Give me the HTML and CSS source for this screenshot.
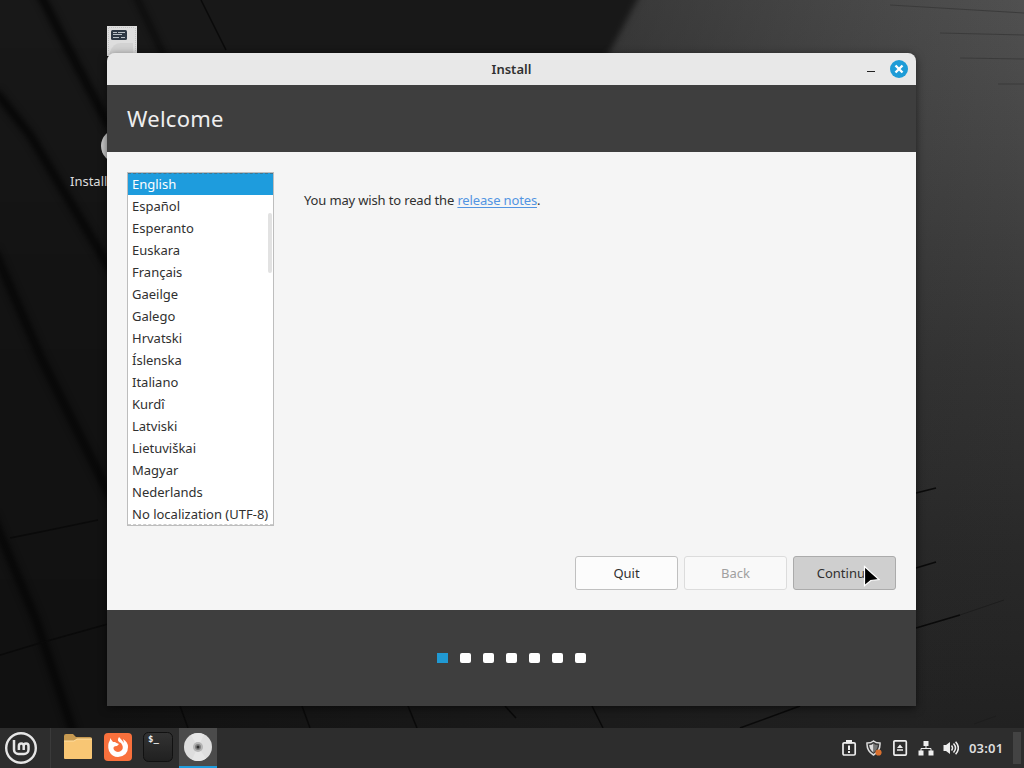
FILE: index.html
```html
<!DOCTYPE HTML>
<html lang="en">
<head>
  <title>Install</title>
  <meta charset="utf-8">
  <meta name="viewport" content="width=device-width" />
  <link rel="stylesheet" href="styles.css">
</head>
<body>
  <div class="desktop">
    <svg class="wallpaper" viewBox="0 0 1024 728" preserveAspectRatio="none">
      <defs>
        <linearGradient id="light" x1="0" y1="0" x2="0" y2="1">
          <stop offset="0" stop-color="#505050" />
          <stop offset=".2" stop-color="#464646" />
          <stop offset=".5" stop-color="#343434" />
          <stop offset=".75" stop-color="#292929" />
          <stop offset="1" stop-color="#212121" />
        </linearGradient>
        <linearGradient id="shade" x1="0" y1="0" x2="1" y2="0">
          <stop offset="0" stop-color="#181818" stop-opacity="0" />
          <stop offset=".6" stop-color="#1b1b1b" stop-opacity=".45" />
          <stop offset="1" stop-color="#222" stop-opacity="0" />
        </linearGradient>
        <linearGradient id="wall" x1="0" y1="0" x2="0" y2="1">
          <stop offset="0" stop-color="#191919" />
          <stop offset=".4" stop-color="#131313" />
          <stop offset="1" stop-color="#111" />
        </linearGradient>
        <linearGradient id="floor" x1="0" y1="0" x2="1" y2="0">
          <stop offset="0" stop-color="#111" />
          <stop offset="1" stop-color="#212121" />
        </linearGradient>
        <filter id="soft" color-interpolation-filters="sRGB"><feGaussianBlur stdDeviation="3" /></filter>
      </defs>
      <rect width="1024" height="728" fill="url(#light)" />
      <rect width="1024" height="728" fill="url(#shade)" />
      <path d="M-20 -20 H648 L600 70 V750 H-20z" fill="url(#wall)" filter="url(#soft)" />
      <rect x="107" y="700" width="809" height="28" fill="url(#floor)" />
      <g stroke="#060606" stroke-width="8" fill="none" filter="url(#soft)">
        <path d="M38 -10 L70 52 L110 128" />
        <path d="M-4 92 L30 135 L72 205 L112 272" />
        <path d="M-6 250 L42 360 L112 500" />
        <path d="M-8 515 L36 620 L74 734" />
        <path d="M134 -8 L164 56" stroke-width="4" />
      </g>
      <g stroke="#0a0a0a" stroke-width="1.5" fill="none">
        <path d="M201 0 L226 50" />
        <path d="M10 538 L40 532 L98 520 M0 655 L40 643 L108 624" />
        <path d="M180 706 L188 728 M302 706 L310 728 M408 706 L417 728 M592 706 L603 728 M505 706 L516 718 M740 728 L800 706" />
        <path d="M916 493 L936 488 M916 568 L936 562 M916 628 L960 615" />
      </g>
      <g stroke="#1d1d1d" fill="none">
        <path d="M960 615 L1004 600 M974 724 L996 716" />
      </g>
      <g stroke="#3b3b3b" fill="none">
        <path d="M890 5 L1024 13 M940 33 L1024 35 M960 58 L1024 59 M998 84 L1024 84" />
      </g>
    </svg>

    <div class="desktop-icon computer">
      <svg width="30" height="30" viewBox="0 0 30 30">
        <rect width="30" height="30" fill="#dedede" />
        <path d="M3 26 Q6 17 14 17 H26 V30 H3z" fill="#d2d2d2" />
        <path d="M1.5 2v24M28.5 2v24M2 1.5h26" stroke="#c4c4c4" stroke-dasharray="1 1" />
        <rect x="4" y="4" width="16" height="10" rx="1.5" fill="#2d3844" />
        <path d="M6 6.5h4M11 6.5h7M6 8.5h9M6 11.5h6M14 11.5h4" stroke="#b9c0c6" />
      </svg>
    </div>
    <div class="desktop-icon disc"></div>
    <div class="desktop-icon label">Install</div>

    <div class="window">
      <div class="titlebar">
        <span class="title">Install</span>
        <div class="controls">
          <span class="minimize"></span>
          <svg class="close" width="18" height="18" viewBox="0 0 18 18">
            <circle cx="9" cy="9" r="9" fill="#1e9cd7" />
            <path d="M5.5 5.5l7 7M12.5 5.5l-7 7" stroke="#fff" stroke-width="2.4" />
          </svg>
        </div>
      </div>
      <div class="header">
        <h1>Welcome</h1>
      </div>
      <div class="content">
        <div class="page">
          <ul class="languages">
            <li class="selected">English</li>
            <li>Español</li>
            <li>Esperanto</li>
            <li>Euskara</li>
            <li>Français</li>
            <li>Gaeilge</li>
            <li>Galego</li>
            <li>Hrvatski</li>
            <li>Íslenska</li>
            <li>Italiano</li>
            <li>Kurdî</li>
            <li>Latviski</li>
            <li>Lietuviškai</li>
            <li>Magyar</li>
            <li>Nederlands</li>
            <li class="last">No localization (UTF-8)</li>
          </ul>
          <p class="notes">You may wish to read the <a href="#">release notes</a>.</p>
        </div>
        <div class="buttons">
          <button>Quit</button>
          <button disabled>Back</button>
          <button class="active">Continue</button>
        </div>
      </div>
      <div class="steps">
        <span class="step current"></span>
        <span class="step"></span>
        <span class="step"></span>
        <span class="step"></span>
        <span class="step"></span>
        <span class="step"></span>
        <span class="step"></span>
      </div>
    </div>
  </div>

  <div class="panel">
    <div class="menu">
      <svg width="34" height="34" viewBox="0 0 34 34" fill="none" stroke="#e6e6e6">
        <circle cx="17" cy="17" r="14.8" stroke-width="2.4" />
        <path d="M10 9v9.500a4.500 4.500 0 0 0 4.500 4.500h5.500a4.500 4.500 0 0 0 4.500 -4.500v-3.500a2.400 2.400 0 0 0 -4.800 0v4M19.700 19v-4a2.400 2.400 0 0 0 -4.800 0v4" stroke-width="2.5" />
      </svg>
    </div>
    <div class="launchers">
      <div class="app">
        <svg width="30" height="28" viewBox="0 0 30 28">
          <path d="M1 3a2 2 0 0 1 2-2h7l3 3h14a2 2 0 0 1 2 2v5H1z" fill="#c79a51" />
          <path d="M1 8h10l3-2h15v19a1 1 0 0 1-1 1H2a1 1 0 0 1-1-1z" fill="#f8c674" />
          <path d="M1 8h10l3-2h15" stroke="#ffdd9f" fill="none" />
        </svg>
      </div>
      <div class="app">
        <svg width="28" height="28" viewBox="0 0 28 28">
          <rect width="28" height="28" rx="4" fill="#f9703c" />
          <path d="M6 7Q3 12 5 18Q8 24 14 24Q24 23 24 14Q24 9 19 6L20 10Q18 7 15 4Q12 8 17 10Q20 14 18 17Q14 21 10 17Q8 13 13 13L15 11Q12 10 11 9L9 9L6 5z" fill="#fff" />
        </svg>
      </div>
      <div class="app">
        <svg width="30" height="30" viewBox="0 0 30 30">
          <defs>
            <linearGradient id="term" x1="0" y1="0" x2="0" y2="1">
              <stop offset="0" stop-color="#333" />
              <stop offset="1" stop-color="#202020" />
            </linearGradient>
          </defs>
          <rect x=".5" y=".5" width="29" height="29" rx="5" fill="url(#term)" stroke="#111" />
          <text x="5" y="10" class="prompt">$_</text>
        </svg>
      </div>
      <div class="app running">
        <svg width="28" height="28" viewBox="0 0 28 28">
          <circle cx="14" cy="14" r="14" fill="#dedede" />
          <path d="M14 14L7 2A14 14 0 0 1 20 1.5zM14 14L22 25.5A14 14 0 0 1 8 26.6z" fill="#e6e6e6" />
          <circle cx="14" cy="14" r="5" fill="#b5b5b5" />
          <circle cx="14" cy="14" r="3" fill="#808080" />
          <circle cx="14" cy="14" r="1.5" fill="#303030" />
        </svg>
      </div>
    </div>
    <div class="tray">
      <svg width="16" height="16" viewBox="0 0 16 16">
        <rect x="2" y="2.8" width="12.200" height="12.2" rx="1.2" fill="none" stroke="#eee" stroke-width="1.7" />
        <path d="M5 0h6v3.500h-6zM7 5.500h2v4.500H7zM7 11h2v2H7z" fill="#eee" />
      </svg>
      <svg width="16" height="16" viewBox="0 0 16 16">
        <path d="M7.500 1Q5 3 1 3Q.5 11 7.500 15Q14.500 11 14 3Q10 3 7.500 1z" fill="#3a3a3a" stroke="#ddd" stroke-width="1.5" />
        <path d="M7.500 3.500Q6 5 3.200 5Q3.500 10 7.500 12.500z" fill="#ddd" />
        <path d="M7.500 3.500Q9 5 11.800 5Q11.500 10 7.500 12.500z" fill="#777" />
        <circle cx="12.500" cy="12.500" r="3.100" fill="#d9702f" />
      </svg>
      <svg width="16" height="16" viewBox="0 0 16 16">
        <rect x="1.900" y=".9" width="12.400" height="14.200" rx="1" fill="none" stroke="#eee" stroke-width="1.700" />
        <path d="M8 4.500l3 3.500H5zM5 9.300h6v1.400H5z" fill="#eee" />
      </svg>
      <svg width="16" height="16" viewBox="0 0 16 16" fill="#eee">
        <path d="M5.500 1h5v5h-5zM.5 10.500h5v5h-5zM10.500 10.500h5v5h-5z" />
        <path d="M8 6v2.500M3 11V8.500h10V11" stroke="#eee" fill="none" />
      </svg>
      <svg width="16" height="16" viewBox="0 0 16 16">
        <path d="M.5 5h2.500L7 2v12L3 11H.5z" fill="#eee" />
        <path d="M8.500 5.500q2 2.500 0 5M10.500 3.500q4 4.500 0 9M12.600 1.700q5.500 6.300 0 12.600" stroke="#eee" stroke-width="1.5" fill="none" />
      </svg>
      <span class="clock">03:01</span>
      <span class="show-desktop"></span>
    </div>
  </div>

  <svg class="cursor" width="18" height="24" viewBox="0 0 18 24">
    <path d="M1.5 1.5L16 14.5L7.800 15.5L1.5 20.800z" fill="#000" stroke="#fff" stroke-width="1.2" />
  </svg>
</body>
</html>
```
FILE: styles.css
```css
html, body{
  margin: 0; padding: 0; width: 100%; height: 100%;
}
body{
  overflow: hidden;
  position: relative;
  display: flex;
  flex-direction: column;
  background: #141414;
  color: #303030;
  font-family: "Noto Sans", "Open Sans", sans-serif;
  font-size: 13px;
  user-select: none;
}
.desktop{
  position: relative;
  height: 728px;
}
.wallpaper{
  display: block;
  width: 100%;
  height: 100%;
}

/* desktop icons and window */
.desktop-icon{
  position: absolute;
}
.computer{
  left: 107px;
  top: 26px;
}
.disc{
  left: 101px;
  top: 129px;
  width: 34px;
  height: 34px;
  border-radius: 50%;
  background: #c8c8c8;
}
.label{
  left: 70px;
  top: 172px;
  color: #ddd;
  line-height: 18px;
}
.window{
  position: absolute;
  left: 107px;
  top: 53px;
  width: 809px;
  height: 653px;
  display: flex;
  flex-direction: column;
  border-radius: 8px 8px 0 0;
  overflow: hidden;
  box-shadow: 0 2px 9px rgba(0, 0, 0, .55);
}
.titlebar{
  display: grid;
  grid-template-columns: 1fr auto 1fr;
  align-items: center;
  height: 32px;
  background: #e8e8e8;
}
.title{
  grid-column: 2;
  font-weight: 600;
}
.controls{
  display: flex;
  justify-content: flex-end;
  align-items: center;
  gap: 15px;
  padding-right: 8px;
}
.minimize{
  width: 8px;
  height: 1px;
  margin-top: 4px;
  background: #222;
}
.header{
  display: flex;
  align-items: center;
  height: 67px;
  padding-left: 20px;
  background: #3e3e3e;
}
h1{
  margin: 0 0 2px;
  color: #eee;
  font-size: 22px;
  font-weight: normal;
  letter-spacing: .25px;
}
.content{
  flex: 1;
  display: flex;
  flex-direction: column;
  justify-content: space-between;
  padding: 20px;
  background: #f5f5f5;
}
.page{
  display: flex;
  gap: 30px;
}
.languages{
  position: relative;
  box-sizing: border-box;
  width: 147px;
  height: 354px;
  margin: 0;
  padding: 0;
  list-style: none;
  border: 1px solid #bdbdbd;
  background: #fff;
}
.languages li{
  height: 22px;
  padding-left: 4px;
  line-height: 22px;
  white-space: nowrap;
}
.languages .selected{
  box-sizing: border-box;
  border-top: 1px dashed #3f7590;
  color: #fff;
  line-height: 20px;
  background: #1e9cdd;
}
.languages .last{
  box-sizing: border-box;
  border-bottom: 1px dashed #ccc;
}
.languages::after{
  content: "";
  position: absolute;
  top: 40px;
  right: 1px;
  width: 4px;
  height: 60px;
  border-radius: 2px;
  background: #e2e2e2;
}
.notes{
  margin: 18px 0 0;
  line-height: 20px;
  letter-spacing: -.15px;
}
.notes a{
  color: #5294e2;
  text-underline-offset: 2px;
}
.buttons{
  display: flex;
  justify-content: flex-end;
  gap: 6px;
}
button{
  width: 103px;
  height: 34px;
  padding: 0;
  border: 1px solid #c0c0c0;
  border-radius: 3px;
  background: #fcfcfc;
  color: #303030;
  font: inherit;
}
button:disabled{
  border-color: #dcdcdc;
  background: #f9f9f9;
  color: #a0a0a0;
}
button.active{
  border-color: #ababab;
  background: #cfcfcf;
}
.steps{
  display: flex;
  align-items: center;
  justify-content: center;
  gap: 12px;
  height: 96px;
  background: #3e3e3e;
}
.step{
  width: 11px;
  height: 10px;
  border-radius: 2px;
  background: #fff;
}
.current{
  border-radius: 0;
  background: #2099d3;
}

/* bottom panel */
.panel{
  display: flex;
  justify-content: space-between;
  height: 40px;
  background: #2d2d2d;
}
.menu{
  display: flex;
  align-items: center;
  width: 46px;
  padding-left: 4px;
  border-right: 1px solid #3a3a3a;
}
.launchers{
  flex: 1;
  display: flex;
  gap: 2px;
  padding-left: 8px;
}
.app{
  display: flex;
  align-items: center;
  justify-content: center;
  width: 38px;
  height: 38px;
}
.running{
  background: #4b4b4b;
  border-bottom: 2px solid #1f9cdd;
}
.prompt{
  fill: #eee;
  font: bold 9px "DejaVu Sans Mono", monospace;
}
.tray{
  display: flex;
  align-items: center;
  gap: 9.7px;
}
.clock{
  color: #ddd;
  font-weight: 600;
  letter-spacing: .2px;
}
.show-desktop{
  width: 8px;
  height: 32px;
  margin-right: 3px;
  background: #434343;
}
.cursor{
  position: absolute;
  left: 863px;
  top: 565px;
}
```
